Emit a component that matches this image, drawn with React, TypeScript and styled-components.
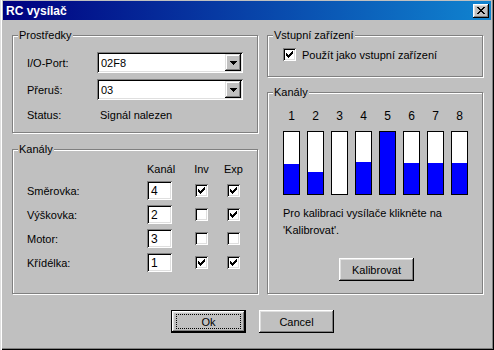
import React from "react";
import styled, { createGlobalStyle } from "styled-components";

const GlobalStyle = createGlobalStyle`
  html, body {
    margin: 0;
    padding: 0;
    background: #c0c0c0;
  }
  body {
    font-family: "Liberation Sans", Arial, sans-serif;
    font-size: 11px;
    color: #000;
  }
`;

const Window = styled.div`
  width: 494px;
  height: 350px;
  box-sizing: border-box;
  background: #c0c0c0;
  display: flex;
  flex-direction: column;
  padding-top: 1px;
  box-shadow: inset 1px 0 #dfdfdf, inset 2px 0 #fff, inset -1px -1px #000,
    inset -2px -2px #808080;
`;

const TitleBar = styled.div`
  height: 19px;
  margin: 0 3px;
  background: linear-gradient(to right, #000080, #1084d0);
  display: flex;
  align-items: center;
  justify-content: space-between;
  padding: 0 2px 0 3px;
`;

const Title = styled.span`
  color: #fff;
  font-weight: bold;
  font-size: 12px;
`;

const CloseButton = styled.span`
  width: 16px;
  height: 14px;
  background: #c0c0c0;
  box-shadow: inset -1px -1px #000, inset 1px 1px #fff, inset -2px -2px #808080,
    inset 2px 2px #dfdfdf;
  display: flex;
  align-items: center;
  justify-content: center;
`;

const Body = styled.div`
  flex: 1;
  display: flex;
  gap: 9px;
  padding: 9px 11px 0 12px;
`;

const Column = styled.div<{ $w: number }>`
  width: ${(p) => p.$w}px;
  display: flex;
  flex-direction: column;
`;

const Group = styled.fieldset<{ $h?: number; $top?: number }>`
  margin: ${(p) => p.$top || 0}px 0 0 0;
  padding: 0;
  min-width: 0;
  border: 1px solid #808080;
  box-shadow: inset 1px 1px #fff, 1px 1px #fff;
  flex: ${(p) => (p.$h ? `0 0 ${p.$h}px` : "1")};
  box-sizing: border-box;
`;

const Legend = styled.legend`
  margin-left: 5px;
  padding: 0 1px;
  line-height: 13px;
  background: #c0c0c0;
`;

const PortGrid = styled.div`
  display: grid;
  grid-template-columns: 70px 146px;
  grid-template-rows: 21px 21px 13px;
  row-gap: 6px;
  align-items: center;
  padding: 10px 0 0 14px;

  & > :nth-child(5),
  & > :nth-child(6) {
    margin-top: 4px;
  }
`;

const Combo = styled.div`
  height: 21px;
  box-sizing: border-box;
  background: #fff;
  box-shadow: inset 1px 1px #808080, inset -1px -1px #fff, inset 2px 2px #000,
    inset -2px -2px #dfdfdf;
  display: flex;
  align-items: center;
  padding: 2px;
`;

const ComboText = styled.span`
  flex: 1;
  padding-left: 2px;
`;

const DropButton = styled.span`
  width: 16px;
  height: 17px;
  background: #c0c0c0;
  box-shadow: inset -1px -1px #000, inset 1px 1px #dfdfdf, inset -2px -2px #808080,
    inset 2px 2px #fff;
  display: flex;
  align-items: center;
  justify-content: center;
`;

const StatusValue = styled.span`
  padding-left: 3px;
`;

const ChannelGrid = styled.div`
  display: grid;
  grid-template-columns: 120px 48px 32px 13px;
  grid-template-rows: 15px repeat(4, 19px);
  row-gap: 5px;
  align-items: center;
  padding: 5px 0 0 14px;
`;

const Head = styled.span<{ $center?: boolean }>`
  width: ${(p) => (p.$center ? "13px" : "auto")};
  display: flex;
  justify-content: ${(p) => (p.$center ? "center" : "flex-start")};
  white-space: nowrap;
`;

const Edit = styled.div`
  width: 25px;
  height: 19px;
  box-sizing: border-box;
  background: #fff;
  box-shadow: inset 1px 1px #808080, inset -1px -1px #fff, inset 2px 2px #000,
    inset -2px -2px #dfdfdf;
  display: flex;
  align-items: center;
  padding-left: 4px;
  font-size: 12px;
`;

const Box = styled.span`
  width: 13px;
  height: 13px;
  box-sizing: border-box;
  background: #fff;
  box-shadow: inset 1px 1px #808080, inset -1px -1px #fff, inset 2px 2px #000,
    inset -2px -2px #dfdfdf;
  display: flex;
  align-items: center;
  justify-content: center;
`;

const DeviceRow = styled.label`
  display: flex;
  align-items: center;
  gap: 6px;
  padding: 6px 0 0 15px;
`;

const Meters = styled.div`
  display: flex;
  gap: 7px;
  padding: 11px 0 0 15px;
`;

const Meter = styled.div`
  display: flex;
  flex-direction: column;
  align-items: center;
  gap: 8px;
`;

const MeterNum = styled.span`
  line-height: 13px;
  font-size: 12px;
`;

const Bar = styled.div`
  width: 17px;
  height: 64px;
  box-sizing: border-box;
  border: 1px solid #000;
  background: #fff;
  display: flex;
  align-items: flex-end;
`;

const BarFill = styled.div`
  width: 100%;
  background: #0000ff;
`;

const Hint = styled.p`
  margin: 10px 0 0 15px;
  width: 183px;
  line-height: 17px;
`;

const Button = styled.button<{ $default?: boolean }>`
  width: 75px;
  height: 23px;
  box-sizing: border-box;
  padding: ${(p) => (p.$default ? "3px 4px" : "0")};
  font-family: inherit;
  font-size: 11px;
  color: #000;
  background: #c0c0c0;
  border: ${(p) => (p.$default ? "1px solid #000" : "none")};
  box-shadow: inset -1px -1px #000, inset 1px 1px #fff, inset -2px -2px #808080,
    inset 2px 2px #dfdfdf;
  display: flex;
  align-items: center;
  justify-content: center;
`;

const Focus = styled.span`
  flex: 1;
  align-self: stretch;
  border: 1px dotted #000;
  display: flex;
  align-items: center;
  justify-content: center;
`;

const CalibrateButton = styled(Button)`
  margin: 19px 0 0 71px;
`;

const Footer = styled.div`
  height: 56px;
  box-sizing: border-box;
  padding: 16px 0 0 171px;
  display: flex;
  gap: 13px;
`;

const Check = () => (
  <svg width="7" height="7" viewBox="0 0 7 7" shapeRendering="crispEdges">
    <path
      d="M0 2h1v3h-1zM1 3h1v3h-1zM2 4h1v3h-1zM3 3h1v3h-1zM4 2h1v3h-1zM5 1h1v3h-1zM6 0h1v3h-1z"
      fill="#000"
    />
  </svg>
);

const CheckBox = ({ checked }: { checked: boolean }) => (
  <Box>{checked && <Check />}</Box>
);

const Arrow = () => (
  <svg width="7" height="4" viewBox="0 0 7 4" shapeRendering="crispEdges">
    <path d="M0 0h7v1h-1v1h-1v1h-1v1h-1v-1h-1v-1h-1v-1h-1z" fill="#000" />
  </svg>
);

const CloseGlyph = () => (
  <svg width="8" height="7" viewBox="0 0 8 7" shapeRendering="crispEdges">
    <path
      d="M0 0h2v1h-2zM6 0h2v1h-2zM1 1h2v1h-2zM5 1h2v1h-2zM2 2h4v1h-4zM3 3h2v1h-2zM2 4h4v1h-4zM1 5h2v1h-2zM5 5h2v1h-2zM0 6h2v1h-2zM6 6h2v1h-2z"
      fill="#000"
    />
  </svg>
);

interface Channel {
  name: string;
  channel: number;
  inv: boolean;
  exp: boolean;
}

const channels: Channel[] = [
  { name: "Směrovka:", channel: 4, inv: true, exp: true },
  { name: "Výškovka:", channel: 2, inv: false, exp: true },
  { name: "Motor:", channel: 3, inv: false, exp: false },
  { name: "Křídélka:", channel: 1, inv: true, exp: true },
];

// inner bar height is 62px
const levels = [30, 22, 0, 32, 62, 31, 31, 31];

const App = () => {
  return (
    <>
      <GlobalStyle />
      <Window>
        <TitleBar>
          <Title>RC vysílač</Title>
          <CloseButton>
            <CloseGlyph />
          </CloseButton>
        </TitleBar>
        <Body>
          <Column $w={246}>
            <Group $h={104}>
              <Legend>Prostředky</Legend>
              <PortGrid>
                <span>I/O-Port:</span>
                <Combo>
                  <ComboText>02F8</ComboText>
                  <DropButton>
                    <Arrow />
                  </DropButton>
                </Combo>
                <span>Přeruš:</span>
                <Combo>
                  <ComboText>03</ComboText>
                  <DropButton>
                    <Arrow />
                  </DropButton>
                </Combo>
                <span>Status:</span>
                <StatusValue>Signál nalezen</StatusValue>
              </PortGrid>
            </Group>
            <Group $top={10}>
              <Legend>Kanály</Legend>
              <ChannelGrid>
                <span />
                <Head>Kanál</Head>
                <Head $center>Inv</Head>
                <Head $center>Exp</Head>
                {channels.map((c) => (
                  <React.Fragment key={c.name}>
                    <span>{c.name}</span>
                    <Edit>{c.channel}</Edit>
                    <CheckBox checked={c.inv} />
                    <CheckBox checked={c.exp} />
                  </React.Fragment>
                ))}
              </ChannelGrid>
            </Group>
          </Column>
          <Column $w={216}>
            <Group $h={48}>
              <Legend>Vstupní zařízení</Legend>
              <DeviceRow>
                <CheckBox checked />
                <span>Použít jako vstupní zařízení</span>
              </DeviceRow>
            </Group>
            <Group $top={9}>
              <Legend>Kanály</Legend>
              <Meters>
                {levels.map((lv, i) => (
                  <Meter key={i}>
                    <MeterNum>{i + 1}</MeterNum>
                    <Bar>
                      <BarFill style={{ height: lv }} />
                    </Bar>
                  </Meter>
                ))}
              </Meters>
              <Hint>Pro kalibraci vysílače klikněte na 'Kalibrovat'.</Hint>
              <CalibrateButton>Kalibrovat</CalibrateButton>
            </Group>
          </Column>
        </Body>
        <Footer>
          <Button $default>
            <Focus>Ok</Focus>
          </Button>
          <Button>Cancel</Button>
        </Footer>
      </Window>
    </>
  );
};

export default App;
